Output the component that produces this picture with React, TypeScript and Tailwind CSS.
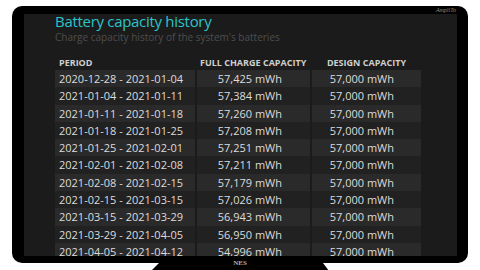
import React from "react";

const rows: [string, string][] = [
  ["2020-12-28 - 2021-01-04", "57,425 mWh"],
  ["2021-01-04 - 2021-01-11", "57,384 mWh"],
  ["2021-01-11 - 2021-01-18", "57,260 mWh"],
  ["2021-01-18 - 2021-01-25", "57,208 mWh"],
  ["2021-01-25 - 2021-02-01", "57,251 mWh"],
  ["2021-02-01 - 2021-02-08", "57,211 mWh"],
  ["2021-02-08 - 2021-02-15", "57,179 mWh"],
  ["2021-02-15 - 2021-03-15", "57,026 mWh"],
  ["2021-03-15 - 2021-03-29", "56,943 mWh"],
  ["2021-03-29 - 2021-04-05", "56,950 mWh"],
  ["2021-04-05 - 2021-04-12", "54,996 mWh"],
];

export default function App() {
  return (
    <div className="w-[480px] h-[270px] bg-white overflow-hidden flex flex-col" style={{ fontFamily: '"Open Sans", "Noto Sans", sans-serif' }}>
      <div className="relative ml-[12px] mt-[6px] w-[456px] h-[257px] shrink-0 bg-black rounded-[10px] pt-[8px] pl-[12px] pr-[11px] pb-[7px]">
        <div className="absolute right-[12px] top-[1px] text-[6px] italic text-[#8a8a8a] leading-none" style={{ fontFamily: '"Liberation Serif", serif' }}>AmpliTo</div>
        <div className="absolute left-0 right-0 bottom-[-4px] text-center text-[7px] font-bold text-[#b0b0b0] leading-none" style={{ fontFamily: '"Liberation Serif", serif' }}>NES</div>
        <div className="w-full h-full bg-[#1b1b1b] overflow-hidden pl-[31px] pt-[2px]">
          <div className="text-[15px] leading-[15px] tracking-[-0.3px] text-[#2cc3c9] -mt-[2px]">Battery capacity history</div>
          <div className="text-[10px] leading-[14px] text-[#4e4e4e] mt-[1px]">Charge capacity history of the system's batteries</div>
          <div className="mt-[11px] w-[364px]">
            <div className="grid grid-cols-[140px_113px_109px] gap-x-[2px] h-[15px] items-center text-[9px] font-bold text-[#cfcfcf] leading-none">
              <div className="pl-[4px]">PERIOD</div>
              <div className="pl-[3px]">FULL CHARGE CAPACITY</div>
              <div className="text-center">DESIGN CAPACITY</div>
            </div>
            {rows.map(([p, v], i) => (
              <div key={p} className="grid grid-cols-[140px_113px_109px] gap-x-[2px] h-[17.3px] text-[11px] text-[#dcdcdc] leading-[17.3px]">
                <div className={"pl-[4px] " + (i % 2 === 0 ? "bg-[#2a2a2a]" : "bg-[#212121]")}>{p}</div>
                <div className={"text-right pr-[28px] " + (i % 2 === 0 ? "bg-[#2a2a2a]" : "bg-[#212121]")}>{v}</div>
                <div className={"text-right pr-[27px] " + (i % 2 === 0 ? "bg-[#2a2a2a]" : "bg-[#212121]")}>57,000 mWh</div>
              </div>
            ))}
          </div>
        </div>
      </div>
      <div className="flex justify-center">
        <svg width="180" height="8" viewBox="0 0 180 8" className="block ml-[2px]">
          <polygon points="8,0 172,0 178,8 0,8" fill="#000" />
        </svg>
      </div>
    </div>
  );
}
